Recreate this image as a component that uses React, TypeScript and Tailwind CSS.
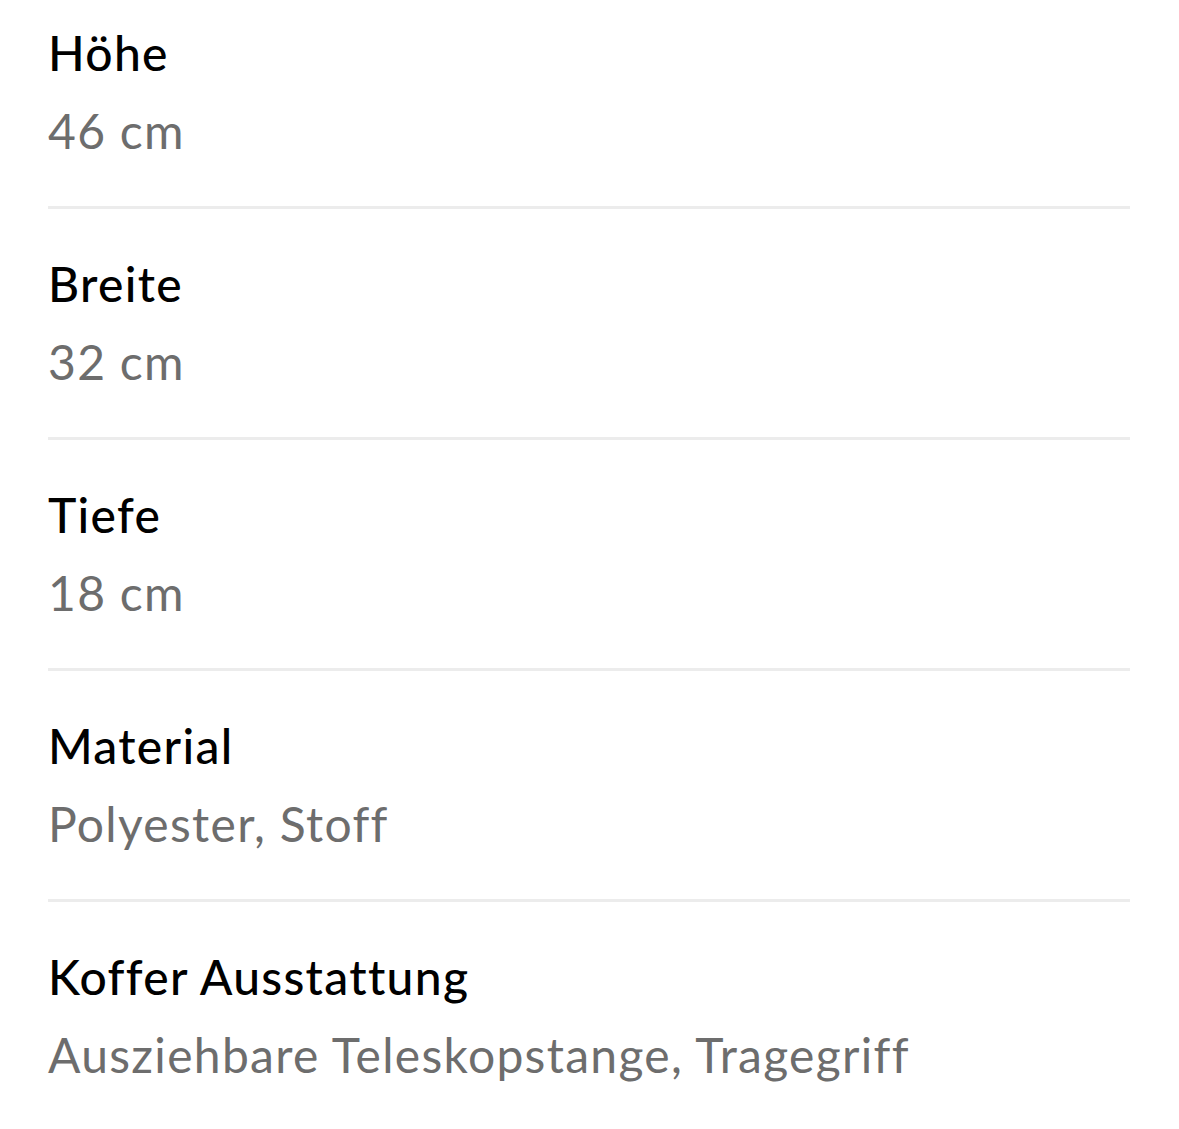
import React from "react";

const rows = [
  { label: "Höhe", value: "46 cm" },
  { label: "Breite", value: "32 cm" },
  { label: "Tiefe", value: "18 cm" },
  { label: "Material", value: "Polyester, Stoff" },
  { label: "Koffer Ausstattung", value: "Ausziehbare Teleskopstange, Tragegriff" },
];

export default function App() {
  return (
    <div
      className="w-[1179px] h-[1129px] bg-white pl-[48px] pr-[49px] pt-[14px]"
      style={{ fontFamily: "Lato, 'Noto Sans', sans-serif" }}
    >
      {rows.map((r, i) => (
        <div
          key={r.label}
          className={
            i === 0
              ? "pb-[36px] border-b-[3px] border-[#ececec]"
              : i === rows.length - 1
              ? "pt-[36px]"
              : "pt-[36px] pb-[36px] border-b-[3px] border-[#ececec]"
          }
        >
          <div className="text-[48px] leading-[78px] tracking-[1.3px] text-black font-medium">{r.label}</div>
          <div className="text-[48px] leading-[78px] tracking-[1.3px] text-[#6d6d6d]">{r.value}</div>
        </div>
      ))}
    </div>
  );
}
